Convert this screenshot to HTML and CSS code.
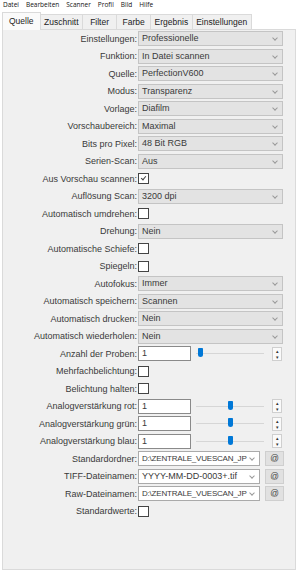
FILE: index.html
```html
<!DOCTYPE html>
<html lang="de">
<head>
    <meta charset="UTF-8">
    <title>VueScan</title>
    <link rel="stylesheet" href="styles.css">
</head>
<body>
    <div class="menubar">
        <span>Datei</span><span>Bearbeiten</span><span>Scanner</span><span>Profil</span><span>Bild</span><span>Hilfe</span>
    </div>
    <div class="tabs">
        <div class="tab active">Quelle</div>
        <div class="tab">Zuschnitt</div>
        <div class="tab">Filter</div>
        <div class="tab">Farbe</div>
        <div class="tab">Ergebnis</div>
        <div class="tab">Einstellungen</div>
    </div>
    <div class="panel">
        <div class="row"><label>Einstellungen:</label><div class="select">Professionelle</div></div>
        <div class="row"><label>Funktion:</label><div class="select">In Datei scannen</div></div>
        <div class="row"><label>Quelle:</label><div class="select">PerfectionV600</div></div>
        <div class="row"><label>Modus:</label><div class="select">Transparenz</div></div>
        <div class="row"><label>Vorlage:</label><div class="select">Diafilm</div></div>
        <div class="row"><label>Vorschaubereich:</label><div class="select">Maximal</div></div>
        <div class="row"><label>Bits pro Pixel:</label><div class="select">48 Bit RGB</div></div>
        <div class="row"><label>Serien-Scan:</label><div class="select">Aus</div></div>
        <div class="row"><label>Aus Vorschau scannen:</label><div class="check checked"></div></div>
        <div class="row"><label>Auflösung Scan:</label><div class="select">3200 dpi</div></div>
        <div class="row"><label>Automatisch umdrehen:</label><div class="check"></div></div>
        <div class="row"><label>Drehung:</label><div class="select">Nein</div></div>
        <div class="row"><label>Automatische Schiefe:</label><div class="check"></div></div>
        <div class="row"><label>Spiegeln:</label><div class="check"></div></div>
        <div class="row"><label>Autofokus:</label><div class="select">Immer</div></div>
        <div class="row"><label>Automatisch speichern:</label><div class="select">Scannen</div></div>
        <div class="row"><label>Automatisch drucken:</label><div class="select">Nein</div></div>
        <div class="row"><label>Automatisch wiederholen:</label><div class="select">Nein</div></div>
        <div class="row"><label>Anzahl der Proben:</label>
            <div class="numctl"><div class="text">1</div><div class="slider"><span class="thumb" style="left: 2px"></span></div><div class="spin"><span>&#9652;</span><span>&#9662;</span></div></div>
        </div>
        <div class="row"><label>Mehrfachbelichtung:</label><div class="check"></div></div>
        <div class="row"><label>Belichtung halten:</label><div class="check"></div></div>
        <div class="row"><label>Analogverstärkung rot:</label>
            <div class="numctl"><div class="text">1</div><div class="slider"><span class="thumb" style="left: 32px"></span></div><div class="spin"><span>&#9652;</span><span>&#9662;</span></div></div>
        </div>
        <div class="row"><label>Analogverstärkung grün:</label>
            <div class="numctl"><div class="text">1</div><div class="slider"><span class="thumb" style="left: 32px"></span></div><div class="spin"><span>&#9652;</span><span>&#9662;</span></div></div>
        </div>
        <div class="row"><label>Analogverstärkung blau:</label>
            <div class="numctl"><div class="text">1</div><div class="slider"><span class="thumb" style="left: 32px"></span></div><div class="spin"><span>&#9652;</span><span>&#9662;</span></div></div>
        </div>
        <div class="row"><label>Standardordner:</label>
            <div class="pathctl"><div class="combo"><span class="path long">D:\ZENTRALE_VUESCAN_JP</span></div><div class="atbtn">@</div></div>
        </div>
        <div class="row"><label>TIFF-Dateinamen:</label>
            <div class="pathctl"><div class="combo"><span class="path">YYYY-MM-DD-0003+.tif</span></div><div class="atbtn">@</div></div>
        </div>
        <div class="row"><label>Raw-Dateinamen:</label>
            <div class="pathctl"><div class="combo"><span class="path long">D:\ZENTRALE_VUESCAN_JP</span></div><div class="atbtn">@</div></div>
        </div>
        <div class="row"><label>Standardwerte:</label><div class="check"></div></div>
    </div>
</body>
</html>
```

FILE: styles.css
```css
body {
    margin: 0;
    background: #ffffff;
    font-family: "Liberation Sans", Arial, sans-serif;
    font-size: 9px;
    color: #3a3a3a;
    width: 300px;
    height: 573px;
    overflow: hidden;
}
.menubar {
    display: flex;
    gap: 7px;
    padding: 0 3px;
    height: 10px;
    font-family: "Open Sans", sans-serif;
    font-size: 6.5px;
    line-height: 9px;
    color: #111;
}
.tabs {
    display: flex;
    align-items: flex-end;
    height: 19px;
    padding: 0 2px;
    position: relative;
    z-index: 1;
}
.tab {
    height: 15px;
    line-height: 15px;
    min-width: 35px;
    box-sizing: border-box;
    text-align: center;
    padding: 0 3.5px;
    font-size: 8.5px;
    color: #222;
    background: #f0f0f0;
    border: 1px solid #dadada;
    border-bottom: none;
    margin-left: -1px;
}
.tab.active {
    height: 18px;
    line-height: 17px;
    min-width: 37px;
    background: #fafafa;
    padding: 0 6px;
    margin-left: 0;
    margin-bottom: -1px;
}
.panel {
    margin: 0 4px 3px 2px;
    height: 541px;
    background: #f0f0f0;
    border: 1px solid #dadada;
    box-sizing: border-box;
    padding: 1px 12px 0 0;
    display: flex;
    flex-direction: column;
    gap: 2.5px;
}
.row {
    display: grid;
    grid-template-columns: 134px 1fr;
    column-gap: 1px;
    align-items: center;
    height: 15px;
}
.row label {
    text-align: right;
    white-space: nowrap;
}
.select {
    height: 15px;
    box-sizing: border-box;
    background: #e3e3e3;
    border: 1px solid #c4c4c4;
    padding-left: 3px;
    line-height: 13px;
    position: relative;
}
.select::after, .combo::after {
    content: "";
    position: absolute;
    right: 5px;
    top: 4px;
    width: 3px;
    height: 3px;
    border-right: 1px solid #999;
    border-bottom: 1px solid #999;
    transform: rotate(45deg);
}
.check {
    width: 9px;
    height: 9px;
    background: #fff;
    border: 1px solid #444;
    position: relative;
}
.check.checked::after {
    content: "";
    position: absolute;
    left: 3px;
    top: 1px;
    width: 2px;
    height: 4px;
    border-right: 1px solid #444;
    border-bottom: 1px solid #444;
    transform: rotate(40deg);
}
.numctl {
    display: flex;
    align-items: center;
}
.text {
    width: 53px;
    height: 15px;
    box-sizing: border-box;
    background: #fff;
    border: 1px solid #8a8a8a;
    padding-left: 3px;
    line-height: 13px;
}
.slider {
    width: 68px;
    height: 11px;
    margin-left: 5px;
    position: relative;
}
.slider::before {
    content: "";
    position: absolute;
    left: 0;
    right: 0;
    top: 5px;
    height: 1px;
    background: #d6d6d6;
}
.thumb {
    position: absolute;
    top: 0;
    width: 5px;
    height: 9px;
    background: #0078d7;
    border-radius: 1px 1px 3px 3px;
}
.spin {
    margin-left: 8px;
    width: 10px;
    height: 14px;
    box-sizing: border-box;
    border: 1px solid #cfcfcf;
    background: #fafafa;
    display: flex;
    flex-direction: column;
    font-size: 5px;
    line-height: 6px;
    text-align: center;
    color: #333;
}
.pathctl {
    display: flex;
    align-items: center;
}
.combo {
    width: 122px;
    height: 15px;
    box-sizing: border-box;
    background: #fff;
    border: 1px solid #aaa;
    padding: 0 14px 0 3px;
    line-height: 13px;
    position: relative;
}
.path {
    display: block;
    white-space: nowrap;
}
.path.long {
    font-size: 8px;
    letter-spacing: -0.2px;
}
.atbtn {
    width: 19px;
    height: 15px;
    box-sizing: border-box;
    margin-left: 5px;
    background: #e1e1e1;
    border: 1px solid #cfcfcf;
    text-align: center;
    line-height: 13px;
    font-size: 8.5px;
    color: #444;
}
```
